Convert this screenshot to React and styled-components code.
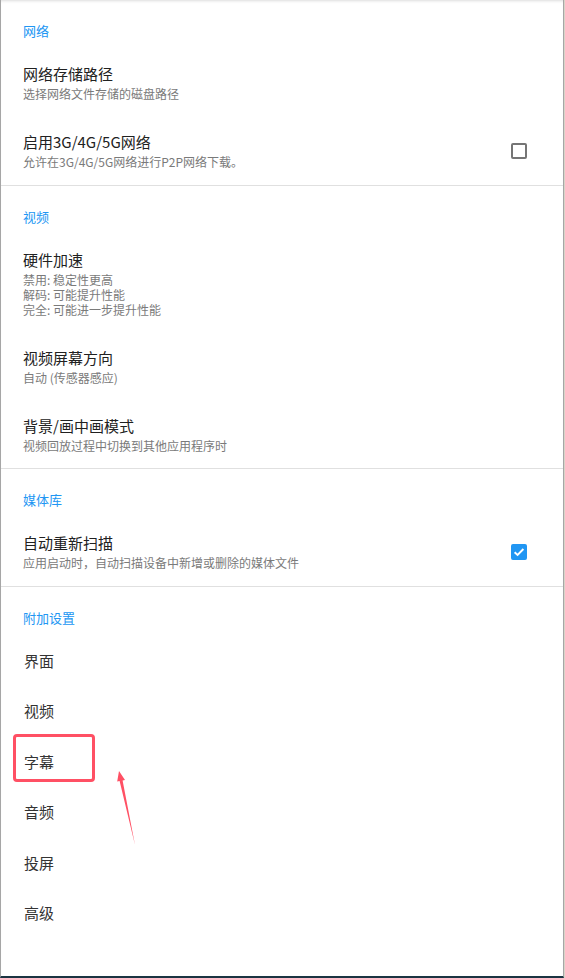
import React from "react"
import styled, { createGlobalStyle } from "styled-components"

const GlobalStyle = createGlobalStyle`
  html, body {
    margin: 0;
    padding: 0;
    background: #d9d4c8;
  }
  body {
    font-family: "Noto Sans CJK SC", "Noto Sans", Roboto, sans-serif;
  }
`

const Page = styled.div`
  position: relative;
  box-sizing: border-box;
  width: 564px;
  height: 978px;
  background: #fff;
  border-left: 1px solid #a6a6a6;
  border-right: 1px solid #a6a6a6;
  border-bottom: 2px solid #1b3442;
  box-shadow: inset 0 3px 3px -2px rgba(0, 0, 0, 0.14);
  overflow: hidden;
`

const Section = styled.section`
  border-bottom: ${p => (p.$last ? "none" : "1px solid #e0e0e0")};
`

const Header = styled.div`
  height: 48.5px;
  box-sizing: border-box;
  padding: 21px 22px 0;
  font-size: 13px;
  line-height: 20px;
  color: #2196f3;
`

const Row = styled.div`
  display: flex;
  align-items: center;
  padding: 15.5px 36px 15.5px 22px;
`

const Texts = styled.div`
  flex: 1;
  min-width: 0;
`

const Title = styled.div`
  font-size: 15px;
  line-height: 20px;
  color: #212121;
`

const Summary = styled.div`
  margin-top: 2px;
  font-size: 12px;
  line-height: 15px;
  color: #7a7a7a;
  white-space: pre-line;
`

const Box = styled.span`
  width: 16px;
  height: 16px;
  box-sizing: border-box;
  border-radius: 2px;
  border: 2px solid ${p => (p.$checked ? "#2196f3" : "#757575")};
  background: ${p => (p.$checked ? "#2196f3" : "transparent")};
  display: flex;
  align-items: center;
  justify-content: center;
`

const Item = styled.div`
  position: relative;
  height: 50.5px;
  display: flex;
  align-items: center;
  padding-left: 23px;
  font-size: 15px;
  color: #333;
`

const Highlight = styled.span`
  position: absolute;
  left: 12px;
  top: -2px;
  width: 82px;
  height: 48px;
  box-sizing: border-box;
  border: 3px solid #ff5064;
  border-radius: 4px;
`

const Arrow = styled.svg`
  position: absolute;
  left: 107px;
  top: 765px;
`

const Checkbox = ({ checked }) => (
  <Box $checked={checked}>
    {checked && (
      <svg width="12" height="12" viewBox="0 0 12 12">
        <path d="M1.6 6.2 L4.6 9 L10.4 3" fill="none" stroke="#fff" strokeWidth="1.9" />
      </svg>
    )}
  </Box>
)

const Pref = ({ title, summary, check }) => (
  <Row>
    <Texts>
      <Title>{title}</Title>
      <Summary>{summary}</Summary>
    </Texts>
    {check !== undefined && <Checkbox checked={check} />}
  </Row>
)

const extras = ["界面", "视频", "字幕", "音频", "投屏", "高级"]

export default function App() {
  return (
    <Page>
      <GlobalStyle />
      <Section>
        <Header>网络</Header>
        <Pref title="网络存储路径" summary="选择网络文件存储的磁盘路径" />
        <Pref title="启用3G/4G/5G网络" summary="允许在3G/4G/5G网络进行P2P网络下载。" check={false} />
      </Section>
      <Section>
        <Header>视频</Header>
        <Pref
          title="硬件加速"
          summary={"禁用: 稳定性更高\n解码: 可能提升性能\n完全: 可能进一步提升性能"}
        />
        <Pref title="视频屏幕方向" summary="自动 (传感器感应)" />
        <Pref title="背景/画中画模式" summary="视频回放过程中切换到其他应用程序时" />
      </Section>
      <Section>
        <Header>媒体库</Header>
        <Pref title="自动重新扫描" summary="应用启动时，自动扫描设备中新增或删除的媒体文件" check={true} />
      </Section>
      <Section $last>
        <Header>附加设置</Header>
        {extras.map(name => (
          <Item key={name}>
            {name === "字幕" && <Highlight />}
            {name}
          </Item>
        ))}
      </Section>
      <Arrow width="32" height="85" viewBox="0 0 32 85">
        <polygon
          points="11,6 17,15 14.6,15.5 27,80 11.6,16.1 9.2,16.6"
          fill="#ff5064"
        />
      </Arrow>
    </Page>
  )
}
